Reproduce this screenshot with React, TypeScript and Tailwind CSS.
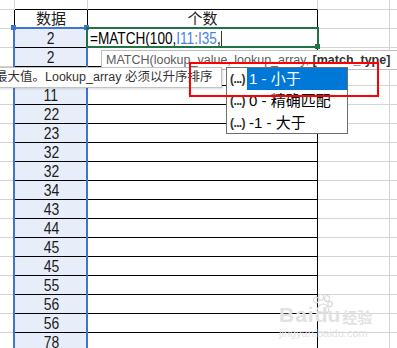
import React from 'react';

// row 3 is covered by the description tooltip
const values = ['2', '2', '', '11', '22', '23', '32', '32', '34', '43', '44', '45', '45', '55', '56', '56', '78'];

const grid = 'border-[#d4d4d4]';

function Row({ value, first }: { value: string; first?: boolean }) {
  return (
    <div className="flex h-[19px] shrink-0">
      <div className="w-[15px] shrink-0 border-r border-b border-r-black border-b-[#d4d4d4]" />
      <div className="w-[73px] shrink-0 border-r border-b border-black bg-[#e8eef9] flex items-end justify-center">
        <span className="inline-block scale-x-[0.82] text-[17px] leading-[17px] text-[#1c1c1c]">{value}</span>
      </div>
      <div className="w-[230px] shrink-0 border-r border-b border-black flex items-end pl-[2px]">
        {first && (
          <span className="inline-block origin-left scale-x-[0.8] whitespace-nowrap text-[17px] leading-[17px] text-black">
            =MATCH(100,<span className="text-[#4a82e0]">I11:I35</span>,
            <span className="inline-block ml-[1px] w-[1px] h-[15px] bg-black align-[-2px]" />
          </span>
        )}
      </div>
      <div className={`w-[72px] shrink-0 border-r border-b ${grid}`} />
      <div className={`flex-1 border-b ${grid}`} />
    </div>
  );
}

function Item({ label, active }: { label: string; active?: boolean }) {
  return (
    <div className="flex h-[22px]">
      <span className="w-[20px] shrink-0 pl-[3px] flex items-center text-[12px] font-bold tracking-[-0.6px] text-[#333]">(...)</span>
      <span className={`flex-1 flex items-center pl-[2px] ${active ? 'bg-[#0078d7] text-white' : 'text-black'}`}>{label}</span>
    </div>
  );
}

export default function App() {
  return (
    <div className="relative w-[397px] h-[348px] overflow-hidden bg-white font-['Liberation_Sans','Noto_Sans_CJK_SC',sans-serif]">
      {/* sheet */}
      <div className="flex flex-col">
        <div className="flex h-[10px] shrink-0">
          <div className={`w-[15px] shrink-0 border-r border-b ${grid}`} />
          <div className="w-[73px] shrink-0 border-r border-b border-r-[#d4d4d4] border-b-black" />
          <div className="w-[230px] shrink-0 border-r border-b border-r-[#d4d4d4] border-b-black" />
          <div className={`w-[72px] shrink-0 border-r border-b ${grid}`} />
          <div className={`flex-1 border-b ${grid}`} />
        </div>
        <div className="flex h-[19px] shrink-0">
          <div className="w-[15px] shrink-0 border-r border-b border-r-black border-b-[#d4d4d4]" />
          <div className="w-[73px] shrink-0 border-r border-b border-black flex items-center justify-center text-[15px] text-[#1c1c1c]">数据</div>
          <div className="w-[230px] shrink-0 border-r border-b border-black flex items-center justify-center text-[15px] text-[#1c1c1c]">个数</div>
          <div className={`w-[72px] shrink-0 border-r border-b ${grid}`} />
          <div className={`flex-1 border-b ${grid}`} />
        </div>
        {values.map((v, i) => (
          <Row key={i} value={v} first={i === 0} />
        ))}
      </div>

      {/* referenced range */}
      <div className="absolute left-[13px] top-[27px] w-[75px] h-[340px] border-2 border-[#3f74d0]" />
      <div className="absolute left-[11px] top-[25px] size-[5px] bg-[#3f74d0]" />
      <div className="absolute left-[84px] top-[25px] size-[5px] bg-[#3f74d0]" />

      {/* active cell */}
      <div className="absolute left-[86px] top-[27px] w-[233px] h-[21px] border-2 border-[#217346]" />
      <div className="absolute left-[315px] top-[44px] size-[5px] bg-[#217346]" />

      {/* watermark */}
      <div className="absolute left-[279px] top-[292px] text-[#e2e2e2]">
        <svg width="24" height="20" viewBox="0 0 24 20" className="absolute left-[31px] top-[2px]" fill="none" stroke="#dadada" strokeWidth="1.2">
          <ellipse cx="6" cy="6" rx="2.5" ry="3" />
          <ellipse cx="11" cy="3.5" rx="2.5" ry="3" />
          <ellipse cx="17" cy="4.5" rx="2.5" ry="3" />
          <ellipse cx="20" cy="10" rx="2.2" ry="2.6" />
          <path d="M7 16c1-4 4-6 6-6s5 2 6 6c0 2-3 3-6 3s-6-1-6-3z" />
        </svg>
        <div className="flex items-end pt-[12px] leading-none">
          <span className="text-[21px] font-bold tracking-[1px]">Bai</span>
          <span className="text-[21px] font-bold">du</span>
          <span className="ml-[2px] text-[15px] font-bold">经验</span>
        </div>
        <div className="mt-[3px] text-[11px] leading-none">jingyan.baidu.com</div>
      </div>

      {/* function signature tooltip */}
      <div className="absolute left-[101px] top-[50px] h-[20px] w-[310px] border border-[#bebebe] bg-white pl-[4px] text-[12.5px] leading-[18px] text-[#5c5c5c] whitespace-nowrap">
        MATCH(lookup_value, lookup_array, <span className="font-bold text-[#333]">[match_type]</span>
      </div>

      {/* description tooltip */}
      <div className="absolute left-[-9px] top-[67px] h-[21px] w-[231px] border border-[#c3c3c3] bg-white pl-[3px] text-[12.5px] leading-[19px] text-[#333] whitespace-nowrap shadow-[1px_1px_2px_rgba(0,0,0,0.15)]">
        最大值。Lookup_array 必须以升序排序
      </div>

      {/* argument list */}
      <div className="absolute left-[226px] top-[67px] w-[122px] h-[67px] border border-[#6e6e6e] bg-white text-[15px] whitespace-nowrap">
        <Item label="1 - 小于" active />
        <Item label="0 - 精确匹配" />
        <Item label="-1 - 大于" />
      </div>

      {/* annotation */}
      <div className="absolute left-[189px] top-[62px] w-[190px] h-[35px] border-2 border-[#ff0000]" />
    </div>
  );
}
